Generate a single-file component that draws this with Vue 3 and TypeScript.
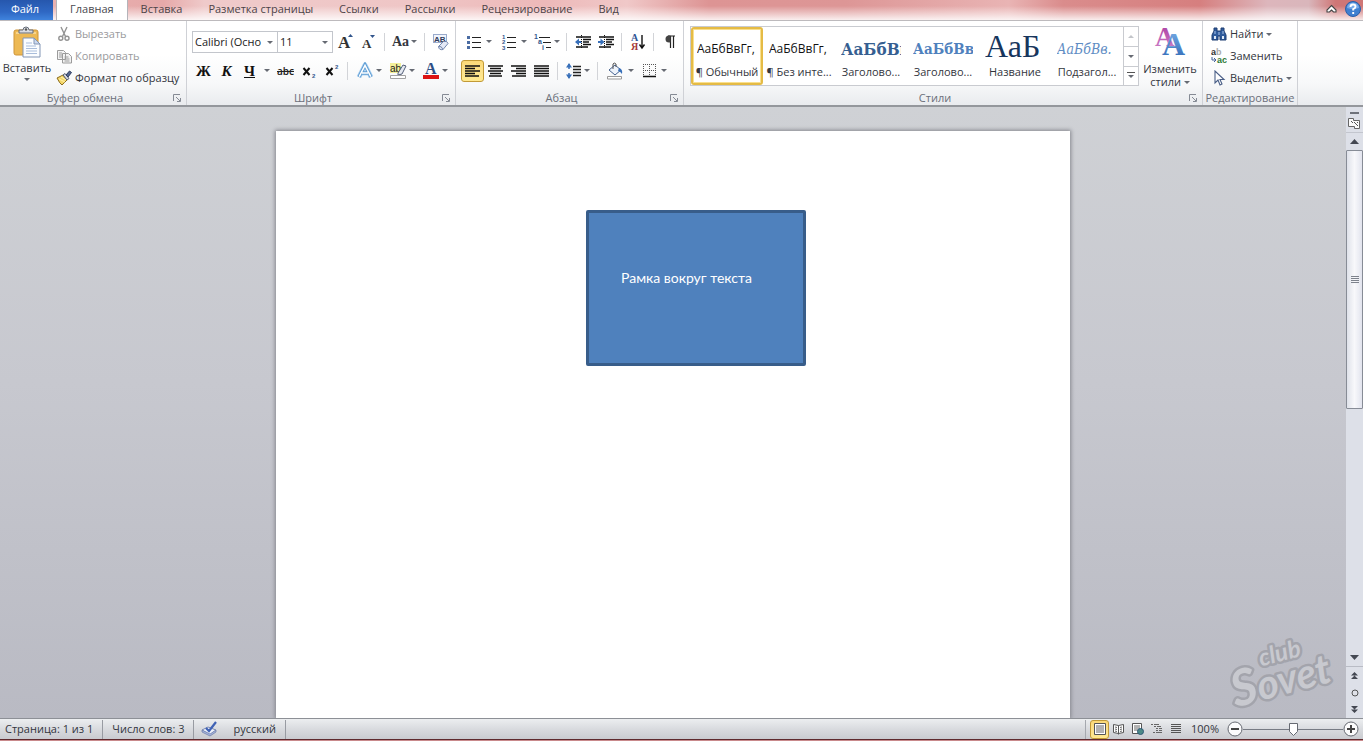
<script setup lang="ts">
import { ref } from 'vue'

interface StyleItem {
  sample: string
  label: string
  kind: string
}

const tabs: string[] = ['Главная', 'Вставка', 'Разметка страницы', 'Ссылки', 'Рассылки', 'Рецензирование', 'Вид']
const activeTab = ref('Главная')

const styles: StyleItem[] = [
  { sample: 'АаБбВвГг,', label: '¶ Обычный', kind: 'plain' },
  { sample: 'АаБбВвГг,', label: '¶ Без инте...', kind: 'plain' },
  { sample: 'АаБбВв', label: 'Заголово...', kind: 'heading1' },
  { sample: 'АаБбВв', label: 'Заголово...', kind: 'heading2' },
  { sample: 'АаБ', label: 'Название', kind: 'title' },
  { sample: 'АаБбВв.', label: 'Подзагол...', kind: 'subtitle' },
]
const activeStyle = ref(0)
const align = ref(0)
const alignIcons: string[] = [
  'M0 1h15M0 3.5h10M0 6h15M0 8.5h10M0 11h14',
  'M0 1h15M2 3.5h11M0 6h15M2 8.5h11M1 11h13',
  'M0 1h15M5 3.5h10M0 6h15M5 8.5h10M1 11h14',
  'M0 1h15M0 3.5h15M0 6h15M0 8.5h15M0 11h15',
]
const alignNames: string[] = ['По левому краю', 'По центру', 'По правому краю', 'По ширине']
const zoom = ref(50)
</script>

<template>
  <div class="app">
    <nav class="tabs">
      <button class="file">Файл</button>
      <button
        v-for="t in tabs"
        :key="t"
        class="tab"
        :class="{ active: t === activeTab }"
        @click="activeTab = t"
      >{{ t }}</button>
      <span class="grow"></span>
      <button class="bare" aria-label="Свернуть ленту">
        <svg width="11" height="10" viewBox="0 0 11 10"><path d="M5.5 1.5L10 6v2H7.500L5.500 6L3.500 8H1V6Z" fill="#fff" stroke="#444" stroke-width="1.100" /></svg>
      </button>
      <button class="bare help" aria-label="Справка">
        <svg width="18" height="18" viewBox="0 0 18 18">
          <circle cx="9" cy="9" r="7.500" fill="#3f7fd0" stroke="#2c5fa8" />
          <path d="M3 8a6 5.500 0 0 1 12 0Q9 10 3 8" fill="#78abea" />
          <path d="M6.500 7Q6.500 4.500 9 4.500T11.500 6.800Q11.500 8 9.200 9.200V10.500M9.200 12v2" fill="none" stroke="#fff" stroke-width="1.900" />
        </svg>
      </button>
    </nav>

    <header class="ribbon">
      <section class="group g-clip">
        <div class="body clip">
          <button class="big">
            <svg width="30" height="32" viewBox="0 0 30 32">
              <rect x="2" y="4" width="24" height="25" rx="2" fill="#edb954" stroke="#cf9539" />
              <path d="M4 6h20v2H4z" fill="#f7d48d" />
              <path d="M7 7V4h4Q11 1 14 1t3 3h4v3z" fill="#d9dce2" stroke="#666c78" />
              <circle cx="14" cy="3.500" r="1.200" fill="#555" />
              <path d="M11 12h11l6 6v13H11z" fill="#fbfdff" stroke="#8295b5" />
              <path d="M22 12v6h6z" fill="#cbd9ee" stroke="#8295b5" />
              <path d="M14 17h6M14 20h10M14 22.500h11M14 25h11M14 27.500h11" stroke="#a9bddb" />
            </svg>
            <span>Вставить</span>
            <i class="caret"></i>
          </button>
          <div class="stack">
            <button class="cmd off">
              <svg width="16" height="16" viewBox="0 0 16 16"><g fill="none" stroke="#939393" stroke-width="1.400"><path d="M5 1L9.500 10.500M11 1L6.500 10.500" /><circle cx="4.800" cy="12.300" r="2" /><circle cx="11" cy="12.300" r="2" /></g></svg>
              <span>Вырезать</span>
            </button>
            <button class="cmd off">
              <svg width="16" height="16" viewBox="0 0 16 16"><g fill="#f3f3f3" stroke="#9b9b9b"><path d="M1.500 2.500h6l2 2v7h-8zM6.500 5.500h6l3 3v6.500h-9z" /><path d="M3 5h3M3 7h3M3 9h3M8.500 9h4M8.500 11h5M8.500 13h5" /></g></svg>
              <span>Копировать</span>
            </button>
            <button class="cmd">
              <svg width="16" height="16" viewBox="0 0 16 16"><path d="M1 8l6-3 4 5-5 5q-2-1-5-7z" fill="#f4d668" stroke="#8b6d1e" /><path d="M3 9l6 3M5 7l5 3" stroke="#fff3ae" /><path d="M7 5l2-1.500 4 5L11 10z" fill="#d7dbe4" stroke="#555d70" /><path d="M10 5l3.500-4 2 1.500L12 7z" fill="#55688f" stroke="#2f3d60" /></svg>
              <span>Формат по образцу</span>
            </button>
          </div>
        </div>
        <footer class="caption"><span>Буфер обмена</span><button class="launch" aria-label="Параметры буфера обмена"><svg width="9" height="9" viewBox="0 0 9 9"><path d="M.5 7V.5H7M3 3l4 4M7.500 4v3.500H4" fill="none" stroke="#858a94" /></svg></button></footer>
      </section>

      <section class="group g-font">
        <div class="body rows">
          <div class="row">
            <label class="combo name"><select aria-label="Шрифт"><option>Calibri (Осно</option></select><i class="caret"></i></label>
            <label class="combo size"><select aria-label="Размер шрифта"><option>11</option></select><i class="caret"></i></label>
            <button class="ic" aria-label="Увеличить размер"><svg width="18" height="18" viewBox="0 0 18 18"><text x="1" y="15" class="serif" font-size="17">A</text><path d="M11 4l2.500-3L16 4z" fill="#31558c" /></svg></button>
            <button class="ic" aria-label="Уменьшить размер"><svg width="18" height="18" viewBox="0 0 18 18"><text x="2" y="15" class="serif" font-size="13">A</text><path d="M10 2l2.500 3L15 2z" fill="#31558c" /></svg></button>
            <i class="sep"></i>
            <button class="ic mid"><b class="aa">Aa</b><i class="caret"></i></button>
            <i class="sep"></i>
            <button class="ic" aria-label="Очистить формат"><svg width="18" height="18" viewBox="0 0 18 18"><rect x="1.500" y="1.500" width="13" height="8" fill="#f1f5fd" stroke="#9aabcc" /><text x="2" y="9" font-size="8" font-weight="700" fill="#2f3c5c" font-family="Liberation Sans">AB</text><path d="M6.500 13.500l5-5q4-1 4.500 2l-5 6q-4 1-4.500-3z" fill="#e4e9f6" stroke="#7386ae" /><path d="M6.500 13.500q3-1 4.500 3" fill="none" stroke="#7386ae" /></svg></button>
          </div>
          <div class="row">
            <button class="ic serif-btn">Ж</button>
            <button class="ic i serif-btn">К</button>
            <button class="ic u serif-btn">Ч</button>
            <i class="caret lone"></i>
            <button class="ic strike">abc</button>
            <button class="ic" aria-label="Подстрочный"><svg width="16" height="16" viewBox="0 0 16 16"><path d="M2.500 5l6 7M8.500 5l-6 7" stroke="#111" stroke-width="2" /><text x="11" y="15" font-size="6" font-weight="700" fill="#31558c" font-family="Liberation Sans">2</text></svg></button>
            <button class="ic" aria-label="Надстрочный"><svg width="16" height="16" viewBox="0 0 16 16"><path d="M2.500 5l6 7M8.500 5l-6 7" stroke="#111" stroke-width="2" /><text x="11" y="6" font-size="6" font-weight="700" fill="#31558c" font-family="Liberation Sans">2</text></svg></button>
            <i class="sep"></i>
            <button class="ic wide" aria-label="Эффекты текста"><svg width="18" height="18" viewBox="0 0 18 18"><path d="M3 15L9 3l6 12M5.500 11h7" fill="none" stroke="#b5d7f3" stroke-width="5" stroke-linejoin="round" /><path d="M3 15L9 3l6 12M5.500 11h7" fill="none" stroke="#5f9dd4" stroke-width="3.400" /><path d="M3.200 14.700L9 3.500l5.800 11.200M6 11h6" fill="none" stroke="#fff" stroke-width="1.500" /></svg><i class="caret"></i></button>
            <button class="ic wide" aria-label="Цвет выделения"><svg width="18" height="18" viewBox="0 0 18 18"><path d="M1 1h11v10H1z" fill="#f3f09a" /><text x="1" y="10" font-size="10" fill="#222" font-family="Liberation Sans">ab</text><path d="M9 11l5-8 3 1-4 8-4 1z" fill="#e4e8f0" stroke="#545f79" /><path d="M1.500 13.500h15v3h-15z" fill="#fff" stroke="#a2a2a2" /></svg><i class="caret"></i></button>
            <button class="ic wide" aria-label="Цвет текста"><svg width="18" height="18" viewBox="0 0 18 18"><text x="3" y="12" font-size="16" font-weight="700" fill="#2d4f86" font-family="Liberation Serif">A</text><path d="M1 13h16v4H1z" fill="#dc1414" /></svg><i class="caret"></i></button>
          </div>
        </div>
        <footer class="caption"><span>Шрифт</span><button class="launch" aria-label="Параметры шрифта"><svg width="9" height="9" viewBox="0 0 9 9"><path d="M.5 7V.5H7M3 3l4 4M7.500 4v3.500H4" fill="none" stroke="#858a94" /></svg></button></footer>
      </section>

      <section class="group g-par">
        <div class="body rows">
          <div class="row">
            <button class="ic list" aria-label="Маркеры"><svg width="16" height="16" viewBox="0 0 16 16"><path d="M6 3.500h9M6 8.500h9M6 13.500h9" stroke="#222" /><path d="M1 2h3v3H1zM1 7h3v3H1zM1 12h3v3H1z" fill="#4a6ca3" /></svg><i class="caret"></i></button>
            <button class="ic list" aria-label="Нумерация"><svg width="16" height="16" viewBox="0 0 16 16"><path d="M6 3.500h9M6 8.500h9M6 13.500h9" stroke="#222" /><g font-size="6" font-weight="700" fill="#31558c" font-family="Liberation Sans"><text x="1" y="5">1</text><text x="1" y="10">2</text><text x="1" y="16">3</text></g></svg><i class="caret"></i></button>
            <button class="ic mid" aria-label="Многоуровневый список"><svg width="18" height="16" viewBox="0 0 18 16"><path d="M5 3.500h11M9 8.500h8M12 13.500h5" stroke="#222" /><g font-size="7" font-weight="700" fill="#31558c" font-family="Liberation Sans"><text x="0" y="5">1</text><text x="4" y="10">a</text><text x="8" y="16">i</text></g></svg><i class="caret"></i></button>
            <i class="sep"></i>
            <button class="ic" aria-label="Уменьшить отступ"><svg width="16" height="16" viewBox="0 0 16 16"><path d="M1 3h15M8 5.500h8M8 8h6M8 10.500h8M1 13h12" stroke="#111" stroke-width="1.600" /><path d="M0 8l4-3.500V7h2.500v2H4v2.500z" fill="#376fb9" /><path d="M6.500 1v14" stroke="#111" stroke-dasharray="1 1" /></svg></button>
            <button class="ic" aria-label="Увеличить отступ"><svg width="16" height="16" viewBox="0 0 16 16"><path d="M1 3h15M8 5.500h8M8 8h6M8 10.500h8M1 13h12" stroke="#111" stroke-width="1.600" /><path d="M6.500 8l-4-3.500V7H0v2h2.500v2.500z" fill="#376fb9" /><path d="M6.500 1v14" stroke="#111" stroke-dasharray="1 1" /></svg></button>
            <i class="sep"></i>
            <button class="ic" aria-label="Сортировка"><svg width="16" height="18" viewBox="0 0 16 18"><g font-size="10" font-weight="700" font-family="Liberation Serif"><text x="1" y="8" fill="#2e5494">А</text><text x="1" y="17" fill="#a53a3a">Я</text></g><path d="M12 2v12M9.500 11.500L12 15l2.500-3.500" stroke="#111" stroke-width="1.400" fill="none" /></svg></button>
            <i class="sep"></i>
            <button class="ic" aria-label="Непечатаемые знаки"><svg width="14" height="16" viewBox="0 0 14 16"><path d="M5 2h7M7.500 2v12M10.500 2v12" stroke="#222" stroke-width="1.200" /><path d="M7.500 1.500H6a3.500 3.500 0 0 0 0 7h1.500z" fill="#444" /></svg></button>
          </div>
          <div class="row">
            <button
              v-for="(d, n) in alignIcons"
              :key="n"
              class="ic"
              :class="{ on: n === align }"
              :aria-label="alignNames[n]"
              @click="align = n"
            ><svg width="15" height="12" viewBox="0 0 15 12"><path :d="d" stroke="#111" stroke-width="1.400" /></svg></button>
            <i class="sep"></i>
            <button class="ic mid" aria-label="Интервал"><svg width="16" height="16" viewBox="0 0 16 16"><path d="M7 3.500h8M7 6.500h8M7 9.500h8M7 12.500h8" stroke="#222" stroke-width="1.300" /><path d="M3 1v5M3 10v5" stroke="#376fb9" stroke-width="1.500" /><path d="M0 4.500L3 0l3 4.500zM0 11.500L3 16l3-4.500z" fill="#376fb9" /></svg><i class="caret"></i></button>
            <i class="sep"></i>
            <button class="ic list" aria-label="Заливка"><svg width="18" height="18" viewBox="0 0 18 18"><path d="M3 8l6-5 6 5-6 5z" fill="#eef3fb" stroke="#44618f" /><path d="M7 7V2q1-2 3 0v3" fill="none" stroke="#555" /><path d="M13 6q4 1 3 6-2-3-4-3z" fill="#376fb9" /><path d="M1.500 14.500h14v2.500h-14z" fill="#fff" stroke="#999" /></svg><i class="caret"></i></button>
            <button class="ic list" aria-label="Границы"><svg width="14" height="14" viewBox="0 0 14 14"><path d="M.5 0v12M6.500 0v12M12.500 0v12M0 .5h13M0 6.500h13" stroke="#555" stroke-dasharray="1 1" /><path d="M0 12.500h13" stroke="#111" stroke-width="1.500" /></svg><i class="caret"></i></button>
          </div>
        </div>
        <footer class="caption"><span>Абзац</span><button class="launch" aria-label="Параметры абзаца"><svg width="9" height="9" viewBox="0 0 9 9"><path d="M.5 7V.5H7M3 3l4 4M7.500 4v3.500H4" fill="none" stroke="#858a94" /></svg></button></footer>
      </section>

      <section class="group g-style">
        <div class="body stylebox">
          <div class="gallery">
            <button
              v-for="(s, n) in styles"
              :key="n"
              class="style"
              :class="{ chosen: n === activeStyle }"
              @click="activeStyle = n"
            >
              <span class="sample" :class="s.kind">{{ s.sample }}</span>
              <span class="label">{{ s.label }}</span>
            </button>
            <div class="scroller">
              <button class="faint" aria-label="Предыдущие стили"><i class="caret up"></i></button>
              <button aria-label="Следующие стили"><i class="caret"></i></button>
              <button aria-label="Все стили"><i class="caret more"></i></button>
            </div>
          </div>
          <button class="big change">
            <svg width="32" height="32" viewBox="0 0 32 32">
              <defs>
                <linearGradient id="pinkA" x2="0" y2="1"><stop stop-color="#a93a9f" /><stop offset="1" stop-color="#cf86cb" /></linearGradient>
                <linearGradient id="blueA" x2="0" y2="1"><stop stop-color="#7fb4ea" /><stop offset="1" stop-color="#2c66b4" /></linearGradient>
              </defs>
              <text x="1" y="20" font-size="27" font-weight="700" fill="url(#pinkA)" font-family="Liberation Serif">A</text>
              <text x="8" y="29" font-size="32" font-weight="700" fill="url(#blueA)" font-family="Liberation Serif">A</text>
            </svg>
            <span>Изменить</span>
            <span>стили <i class="caret inline"></i></span>
          </button>
        </div>
        <footer class="caption"><span>Стили</span><button class="launch" aria-label="Окно стилей"><svg width="9" height="9" viewBox="0 0 9 9"><path d="M.5 7V.5H7M3 3l4 4M7.500 4v3.500H4" fill="none" stroke="#858a94" /></svg></button></footer>
      </section>

      <section class="group g-edit">
        <div class="body stack">
          <button class="cmd">
            <svg width="16" height="16" viewBox="0 0 16 16"><path d="M3 2h3v3h4V2h3v3l2 4v5H9v-4H7v4H1V9l2-4z" fill="#2f5b9c" stroke="#1f3f73" /><path d="M3 10h2v3H3zM11 10h2v3h-2z" fill="#dfeaf8" /><path d="M4 5v3M12 5v3M8 6v3" stroke="#a9c4ea" /></svg>
            <span>Найти</span><i class="caret"></i>
          </button>
          <button class="cmd">
            <svg width="16" height="16" viewBox="0 0 16 16"><g font-family="Liberation Sans" font-size="9" font-weight="700"><text x="0" y="7" fill="#333">a</text><text x="5" y="7" fill="#aaa">b</text><text x="6" y="15" fill="#2c7a34">ac</text></g><path d="M1 9v3h3M3 10l2 2-2 2" fill="none" stroke="#44629b" /></svg>
            <span>Заменить</span>
          </button>
          <button class="cmd">
            <svg width="16" height="16" viewBox="0 0 16 16"><path d="M4 1v12l3-3 2 5 2-1-2-4.500h4z" fill="#fff" stroke="#4a5f87" stroke-width="1.100" /></svg>
            <span>Выделить</span><i class="caret"></i>
          </button>
        </div>
        <footer class="caption"><span>Редактирование</span></footer>
      </section>
    </header>

    <main class="work">
      <div class="desk">
        <article class="page">
          <div class="shape">Рамка вокруг текста</div>
        </article>
        <svg class="mark" width="110" height="84" viewBox="0 0 110 84">
          <g transform="rotate(-15 50 50)" fill="#c8c9cf" stroke="#a3a4ac" stroke-width="5" stroke-linejoin="round" paint-order="stroke" font-family="Lato, sans-serif" font-style="italic" font-weight="700">
            <text x="38" y="37" font-size="24">club</text>
            <text x="3" y="70" font-size="41"><tspan font-size="50">S</tspan>ovet</text>
          </g>
        </svg>
      </div>
      <aside class="vbar">
        <div class="split"></div>
        <button class="ruler" aria-label="Линейка"><svg width="13" height="13" viewBox="0 0 13 13"><path d="M.5 1.500h5v2h6v8h-5v-2h-6z" fill="#fafafa" stroke="#666" /><path d="M3 4l2 2M6 5l2 2M8 7l2 2M9 5l1 1" stroke="#555" /></svg></button>
        <button class="arrow" aria-label="Вверх"><svg width="9" height="5" viewBox="0 0 9 5"><path d="M0 5l4.500-5L9 5z" fill="#444852" /></svg></button>
        <div class="track"><div class="thumb"><svg width="8" height="8" viewBox="0 0 8 8"><path d="M0 .5h8M0 2.500h8M0 4.500h8M0 6.500h8" stroke="#7d828c" /></svg></div></div>
        <button class="arrow" aria-label="Вниз"><svg width="9" height="5" viewBox="0 0 9 5"><path d="M0 0l4.500 5L9 0z" fill="#444852" /></svg></button>
        <div class="browse">
          <button aria-label="Предыдущая страница"><svg width="7" height="7" viewBox="0 0 7 7"><path d="M0 3.500L3.500 0 7 3.500zM0 7l3.500-3.500L7 7z" fill="#444852" /></svg></button>
          <button aria-label="Объект перехода"><svg width="8" height="8" viewBox="0 0 8 8"><circle cx="4" cy="4" r="3" fill="#dfe1e8" stroke="#555" /></svg></button>
          <button aria-label="Следующая страница"><svg width="7" height="7" viewBox="0 0 7 7"><path d="M0 0l3.500 3.500L7 0zM0 3.500L3.500 7 7 3.500z" fill="#444852" /></svg></button>
        </div>
      </aside>
    </main>

    <footer class="status">
      <button class="cell">Страница: 1 из 1</button>
      <button class="cell">Число слов: 3</button>
      <button class="cell lang">
        <svg width="17" height="16" viewBox="0 0 17 16"><path d="M1 9l6-3 8 3-6 5z" fill="#eef2fb" stroke="#7a89b3" /><path d="M1 9v2l8 4 6-4V9l-6 4z" fill="#a7b6dc" stroke="#6a7aa8" stroke-width=".7" /><path d="M5 7l3 3 7-9" fill="none" stroke="#3f62b5" stroke-width="2.200" /></svg>
        <span>русский</span>
      </button>
      <span class="grow"></span>
      <div class="views">
        <button class="on" aria-label="Разметка страницы"><svg width="12" height="12" viewBox="0 0 12 12"><path d="M.5.5h11v11H.5z" fill="#fff" stroke="#555" /><path d="M2 3h8M2 5h8M2 7h8M2 9h8" stroke="#666" /></svg></button>
        <button aria-label="Режим чтения"><svg width="12" height="12" viewBox="0 0 12 12"><path d="M.5 1.500l5 1 5-1v8l-5 1-5-1zM5.500 2.500v9" fill="#fff" stroke="#555" /><path d="M2 4l2 .5M2 6l2 .5M2 8l2 .5M7 4.500L9 4M7 6.500L9 6M7 8.500L9 8" stroke="#666" /></svg></button>
        <button aria-label="Веб-документ"><svg width="12" height="12" viewBox="0 0 12 12"><path d="M.5.500h9v10h-9z" fill="#fff" stroke="#555" /><path d="M2 3h6M2 5h6M2 7h4" stroke="#666" /><circle cx="8.500" cy="8.500" r="3" fill="#4c8a86" stroke="#2d5877" /></svg></button>
        <button aria-label="Структура"><svg width="12" height="12" viewBox="0 0 12 12"><path d="M0 1.500h8M3 3.500h7M5 5.500h6M5 7.500h6M2 9.500h9" stroke="#666" stroke-dasharray="2 1 9" /></svg></button>
        <button aria-label="Черновик"><svg width="12" height="12" viewBox="0 0 12 12"><path d="M1 1.500h10M1 3.500h10M1 5.500h10M1 7.500h10M1 9.500h10" stroke="#555" /></svg></button>
      </div>
      <button class="pct">100%</button>
      <button class="round" aria-label="Уменьшить масштаб"><svg width="16" height="16" viewBox="0 0 16 16"><circle cx="8" cy="8" r="7" fill="#fbfbfc" stroke="#666a72" /><path d="M4 8h8" stroke="#444" stroke-width="2" /></svg></button>
      <input v-model="zoom" class="zoom" type="range" min="0" max="100" aria-label="Масштаб" />
      <button class="round" aria-label="Увеличить масштаб"><svg width="16" height="16" viewBox="0 0 16 16"><circle cx="8" cy="8" r="7" fill="#fbfbfc" stroke="#666a72" /><path d="M4 8h8M8 4v8" stroke="#444" stroke-width="2" /></svg></button>
    </footer>
    <div class="edge"></div>
  </div>
</template>

<style>
body {
  margin: 0;
}
</style>

<style scoped>
.app {
  display: flex;
  flex-direction: column;
  height: 100vh;
  overflow: hidden;
  font: 11px/14px "Open Sans", "Noto Sans", sans-serif;
  color: #33363d;
}
.app * {
  box-sizing: border-box;
}
button {
  display: flex;
  align-items: center;
  justify-content: center;
  margin: 0;
  padding: 0;
  border: 0;
  background: none;
  font: inherit;
  color: inherit;
  white-space: nowrap;
}
svg {
  display: block;
  flex: none;
}
.grow {
  flex: 1;
}

/* tabs */
.tabs {
  display: flex;
  flex: none;
  height: 20px;
  background:
    linear-gradient(rgba(255, 255, 255, 0) 30%, rgba(255, 255, 255, 0.85)),
    linear-gradient(90deg, #e9b4b4 0, #e6a9a9 12%, #efcaca 15%, #efc6c6 30%, #edb9b9 40%, #f0c8c8 46%, #dd9494 52%, #dd9696 62%, #e9b4b4 74%, #da8c8c 78%, #d67f7f 88%, #ddb6bc 93%, #d9b6bb 96%, #cf7676 98%);
  color: #4d4347;
}
.file,
.tab,
.bare {
  padding-bottom: 2px;
}
.file {
  width: 53px;
  margin-right: 3px;
  padding-right: 3px;
  background: linear-gradient(#2657ad, #2f68c4 60%, #3f83dd);
  color: #fff;
}
.tab {
  padding-left: 13px;
  padding-right: 13px;
}
.tab.active {
  border: 1px solid #b4b4ba;
  border-width: 0 1px;
  background: #fff;
  color: #4a4a4f;
}
.bare {
  width: 21px;
}

/* ribbon */
.ribbon {
  display: flex;
  flex: none;
  height: 87px;
  border-top: 1px solid #bdbabd;
  border-bottom: 2px solid #94979c;
  background: linear-gradient(#fff 40%, #f7f8f9 75%, #e9ebee);
}
.group {
  display: flex;
  flex: none;
  flex-direction: column;
  border-right: 1px solid #cfd1d6;
}
.g-clip {
  width: 187px;
}
.g-font {
  width: 269px;
}
.g-par {
  width: 228px;
}
.g-style {
  width: 519px;
}
.g-edit {
  width: 95px;
}
.body {
  flex: 1;
}
.caption {
  display: flex;
  align-items: center;
  height: 16px;
  padding-top: 2px;
  color: #6b6f7a;
}
.caption span {
  flex: 1;
  text-align: center;
}
.launch {
  width: 14px;
  height: 14px;
  margin-right: 2px;
}
.caret {
  flex: none;
  width: 0;
  height: 0;
  border: 3px solid transparent;
  border-top-color: #666a73;
  border-bottom: 0;
}
.clip {
  display: flex;
}
.big {
  flex-direction: column;
  justify-content: flex-start;
  width: 54px;
  padding-top: 5px;
}
.big span {
  line-height: 13px;
}
.big .caret {
  margin-top: 4px;
}
.big svg {
  margin-bottom: 3px;
}
.stack {
  display: flex;
  flex-direction: column;
  padding-top: 2px;
}
.cmd {
  justify-content: flex-start;
  gap: 3px;
  height: 22px;
  padding-left: 2px;
}
.off {
  color: #9a9a9d;
}
.rows {
  display: flex;
  flex-direction: column;
  gap: 6px;
  padding: 9px 0 0 5px;
}
.row {
  display: flex;
  align-items: center;
  height: 23px;
}
.ic {
  flex: none;
  gap: 2px;
  width: 23px;
  height: 22px;
}
.wide {
  width: 33px;
}
.list {
  width: 35px;
  gap: 4px;
}
.mid {
  width: 31px;
}
.sep {
  flex: none;
  width: 1px;
  height: 18px;
  margin: 0 4px;
  background: #d2d4d8;
}
.combo {
  position: relative;
  flex: none;
  height: 22px;
  border: 1px solid #c3c6cc;
  background: #fff;
}
.combo + .combo {
  border-left: 0;
  margin-right: 1px;
}
.combo select {
  width: 100%;
  height: 20px;
  padding: 0 12px 0 2px;
  border: 0;
  background: none;
  appearance: none;
  font: inherit;
  color: #222;
}
.combo .caret {
  position: absolute;
  top: 9px;
  right: 4px;
}
.name {
  width: 86px;
}
.size {
  width: 55px;
}
.serif {
  font-family: "Liberation Serif", serif;
  font-weight: 700;
  fill: #333;
}
.aa {
  font: 700 14px/18px "Liberation Serif", serif;
}
.serif-btn {
  font: 700 15px/18px "Liberation Serif", serif;
  color: #111;
}
.i {
  font-style: italic;
}
.u {
  text-decoration: underline;
}
.strike {
  color: #222;
  font-size: 10px;
  font-weight: 600;
  text-decoration: line-through;
}
.lone {
  margin: 0 4px 0 3px;
}
.on {
  border: 1px solid #c29a36;
  border-radius: 3px;
  background: linear-gradient(#fbd978, #fde28b 50%, #ffe98f);
}

/* styles */
.stylebox {
  display: flex;
  padding: 5px 0 0 6px;
}
.gallery {
  display: flex;
  height: 60px;
  border: 1px solid #c9cbd0;
  background: #fff;
}
.style {
  flex-direction: column;
  width: 72px;
  height: 58px;
  padding: 4px 3px 2px;
  overflow: hidden;
}
.chosen {
  padding: 2px 1px 0;
  border: 2px solid #e5bb45;
  border-radius: 3px;
  box-shadow: inset 0 0 0 1px #f9e08f;
}
.sample {
  width: 60px;
  height: 30px;
  overflow: hidden;
  line-height: 30px;
  text-align: left;
}
.label {
  height: 16px;
  line-height: 16px;
}
.plain {
  font-size: 12px;
  color: #111;
}
.heading1,
.heading2,
.subtitle {
  font-family: "DejaVu Serif Condensed", "DejaVu Serif", serif;
}
.heading1 {
  font-size: 17px;
  font-weight: 700;
  color: #365f91;
}
.heading2 {
  font-size: 15px;
  font-weight: 700;
  color: #4f81bd;
}
.title {
  font-family: "Liberation Serif", serif;
  font-size: 32px;
  line-height: 24px;
  color: #17365d;
}
.subtitle {
  font-size: 14px;
  font-style: italic;
  color: #5f8dc4;
}
.scroller {
  width: 15px;
  border-left: 1px solid #c9cbd0;
}
.scroller button {
  width: 14px;
  height: 19px;
}
.scroller button + button {
  height: 20px;
  border-top: 1px solid #c9cbd0;
}
.caret.up {
  border: 3px solid transparent;
  border-top: 0;
  border-bottom-color: #c3c5ca;
}
.caret.more {
  position: relative;
}
.caret.more::before {
  content: "";
  position: absolute;
  top: -6px;
  left: -4px;
  width: 8px;
  height: 1px;
  background: #555;
}
.change {
  width: 62px;
  padding-top: 0;
}
.change svg {
  margin-bottom: 4px;
}
.big .inline {
  display: inline-block;
  margin: 0 0 2px;
}
.g-edit .cmd {
  padding-left: 8px;
}

/* workspace */
.work {
  display: flex;
  flex: 1;
  min-height: 0;
}
.desk {
  position: relative;
  display: flex;
  flex: 1;
  justify-content: center;
  padding-top: 24px;
  overflow: hidden;
  background: linear-gradient(#cfd1d5, #c7c8cf 45%, #b9bac3);
}
.page {
  width: 794px;
  padding: 79px 0 0 310px;
  background: #fff;
  box-shadow: 0 0 4px 1px #85868d;
}
.shape {
  width: 220px;
  height: 156px;
  padding: 55px 32px;
  border: 3px solid #385d8a;
  border-radius: 2px;
  background: #4f81bd;
  color: #fff;
  font: 14px/20px Lato, "Open Sans", sans-serif;
  white-space: nowrap;
}
.mark {
  position: absolute;
  right: 10px;
  bottom: 8px;
}
.vbar {
  display: flex;
  flex-direction: column;
  align-items: center;
  width: 17px;
  padding-top: 5px;
  background: #dde0e8;
}
.split {
  width: 9px;
  height: 2px;
  background: #6e727a;
}
.ruler {
  width: 17px;
  height: 19px;
  border-bottom: 1px solid #c3c6ce;
}
.arrow {
  width: 17px;
  height: 17px;
}
.track {
  flex: 1;
  width: 100%;
}
.thumb {
  display: flex;
  align-items: center;
  justify-content: center;
  height: 52%;
  border: 1px solid #878c96;
  border-radius: 1px;
  background: linear-gradient(90deg, #dfe2ea, #f8f8fb 50%, #e2e4ee);
}
.browse {
  display: flex;
  flex-direction: column;
  align-items: center;
  width: 100%;
  border-top: 1px solid #b9bcc5;
}
.browse button {
  width: 17px;
  height: 17px;
}

/* status */
.status {
  display: flex;
  flex: none;
  align-items: center;
  height: 21px;
  border-top: 1px solid #8d9096;
  background: linear-gradient(#eceef0, #d9dbdf 50%, #c9cbd0);
}
.cell {
  height: 19px;
  padding: 0 9px;
  border-right: 1px solid #989ba2;
}
.cell:first-child {
  padding-left: 5px;
}
.lang {
  gap: 15px;
  padding-left: 7px;
}
.views {
  display: flex;
  align-items: center;
  height: 19px;
  padding: 0 2px 0 4px;
  border-left: 1px solid #a5a8ae;
}
.views button {
  width: 19px;
  height: 19px;
}
.pct {
  width: 36px;
}
.round {
  width: 16px;
  margin: 0 4px;
}
.zoom {
  width: 100px;
  height: 18px;
  margin: 0 -4px;
  appearance: none;
  background: linear-gradient(#777b84, #777b84) center / 100% 1px no-repeat;
}
.zoom::-webkit-slider-thumb {
  width: 9px;
  height: 13px;
  appearance: none;
  background: url("data:image/svg+xml,%3Csvg xmlns='http://www.w3.org/2000/svg' width='9' height='13'%3E%3Cpath d='M.5.5h8v8l-4 4-4-4z' fill='%23fff' stroke='%23666a72'/%3E%3C/svg%3E");
}
.edge {
  flex: none;
  height: 2px;
  background: linear-gradient(#5e2a2e 50%, #c98a8c 50%);
}
</style>
